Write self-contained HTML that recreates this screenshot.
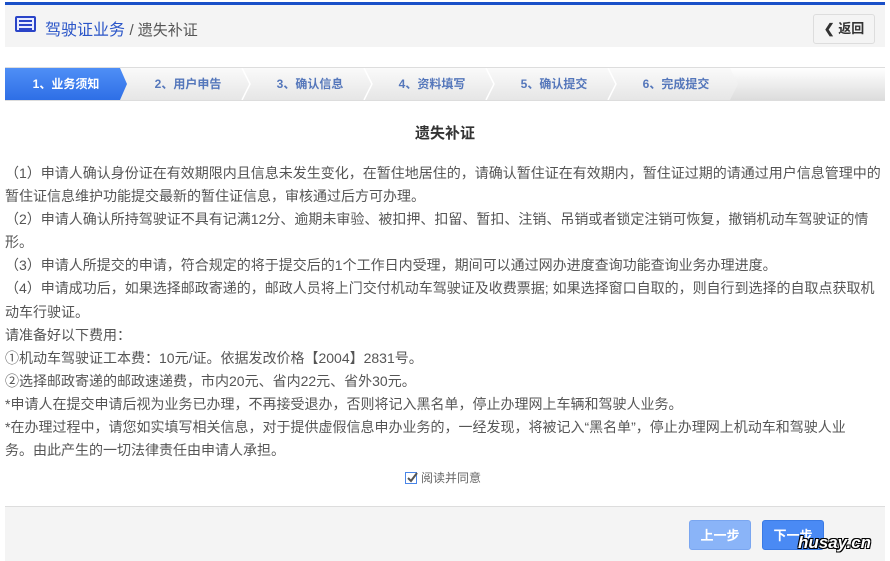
<!DOCTYPE html>
<html><head><meta charset="utf-8"><style>
*{margin:0;padding:0;box-sizing:border-box}
body{width:890px;height:561px;background:#fff;font-family:"Liberation Sans","Noto Sans CJK SC",sans-serif;position:relative;overflow:hidden;color:#555}
.topline{position:absolute;left:5px;top:2px;width:880px;height:3px;background:#1a50c8}
.hdr{position:absolute;left:5px;top:5px;width:880px;height:42px;background:#f4f4f4}
.icon{position:absolute;left:10px;top:11px;width:21px;height:16px;border:2px solid #2a44c8;border-radius:2px;background:#e8ecff}
.icon i{position:absolute;left:2px;right:2px;height:2px;background:#2a44c8}
.ht{position:absolute;left:40px;top:11px;font-size:16px;color:#2a55c8;white-space:nowrap}
.ht span{color:#555;font-size:15px}
.back{position:absolute;left:808px;top:9px;width:62px;height:30px;border:1px solid #ddd;border-radius:3px;background:#f4f4f4;font-size:13px;font-weight:bold;color:#333;text-align:center;line-height:28px}
.steps{position:absolute;left:5px;top:67px;width:880px;height:34px;background:linear-gradient(#fafafa,#e6e6e6);border-top:1px solid #ddd;border-bottom:1px solid #ddd}
.st{position:absolute;top:0;height:32px;line-height:32px;font-size:12px;font-weight:bold;color:#5577bb;width:122px;text-align:center}
.st1{left:0;width:122px;background:linear-gradient(#4f8ff6,#2e6fe6);color:#fff;clip-path:polygon(0 0,115px 0,122px 16px,115px 32px,0 32px)}
.title{position:absolute;left:0;width:890px;top:122px;text-align:center;font-size:15px;font-weight:bold;color:#333}
.txt{position:absolute;left:5px;top:162px;font-size:14px;line-height:23.1px;white-space:nowrap;color:#555}
.chk{position:absolute;left:405px;top:469px;font-size:12px;color:#666}
.chk b{display:inline-block;width:12px;height:12px;border:1px solid #4a86e8;vertical-align:-2px;margin-right:4px;position:relative}
.foot{position:absolute;left:5px;top:506px;width:880px;height:55px;background:#f4f4f4;border-top:1px solid #ddd}
.btn{position:absolute;top:13px;width:62px;height:30px;border-radius:3px;color:#fff;font-size:13px;font-weight:bold;text-align:center;line-height:30px}
.wm{position:absolute;left:798px;top:533px;font-size:17px;font-weight:bold;color:#fff;text-shadow:1px 1px 0 #000,-1px -1px 0 #000,1px -1px 0 #000,-1px 1px 0 #000;font-style:italic}
</style></head><body>
<div class="topline"></div>
<div class="hdr">
<div class="icon"><i style="top:2px"></i><i style="top:6px"></i><i style="top:10px"></i></div>
<div class="ht">驾驶证业务 <span>/ 遗失补证</span></div>
<div class="back">❮ 返回</div>
</div>
<div class="steps">
<div class="st st1">1、业务须知</div>
<div class="st" style="left:122px">2、用户申告</div>
<div class="st" style="left:244px">3、确认信息</div>
<div class="st" style="left:366px">4、资料填写</div>
<div class="st" style="left:488px">5、确认提交</div>
<div class="st" style="left:610px">6、完成提交</div>
<svg style="position:absolute;left:0;top:0" width="880" height="32"><g stroke="#fff" stroke-width="1.5" fill="none"><path d="M237 0l8 16-8 16M359 0l8 16-8 16M481 0l8 16-8 16M603 0l8 16-8 16"/></g><path d="M725 0 L880 0 L880 32 L725 32 L733 16Z" fill="url(#g)"/><defs><linearGradient id="g" x1="0" y1="0" x2="0" y2="1"><stop offset="0" stop-color="#fff"/><stop offset="1" stop-color="#dcdcdc"/></linearGradient></defs></svg>
</div>
<div class="title">遗失补证</div>
<div class="txt">（1）申请人确认身份证在有效期限内且信息未发生变化，在暂住地居住的，请确认暂住证在有效期内，暂住证过期的请通过用户信息管理中的<br>暂住证信息维护功能提交最新的暂住证信息，审核通过后方可办理。<br>（2）申请人确认所持驾驶证不具有记满12分、逾期未审验、被扣押、扣留、暂扣、注销、吊销或者锁定注销可恢复，撤销机动车驾驶证的情<br>形。<br>（3）申请人所提交的申请，符合规定的将于提交后的1个工作日内受理，期间可以通过网办进度查询功能查询业务办理进度。<br>（4）申请成功后，如果选择邮政寄递的，邮政人员将上门交付机动车驾驶证及收费票据; 如果选择窗口自取的，则自行到选择的自取点获取机<br>动车行驶证。<br>请准备好以下费用：<br>①机动车驾驶证工本费：10元/证。依据发改价格【2004】2831号。<br>②选择邮政寄递的邮政速递费，市内20元、省内22元、省外30元。<br>*申请人在提交申请后视为业务已办理，不再接受退办，否则将记入黑名单，停止办理网上车辆和驾驶人业务。<br>*在办理过程中，请您如实填写相关信息，对于提供虚假信息申办业务的，一经发现，将被记入“黑名单”，停止办理网上机动车和驾驶人业<br>务。由此产生的一切法律责任由申请人承担。</div>
<div class="chk"><b><svg width="12" height="12" style="position:absolute;left:0;top:-1px"><path d="M2 6l3 3 6-8" stroke="#555" stroke-width="2" fill="none"/></svg></b>阅读并同意</div>
<div class="foot">
<div class="btn" style="left:684px;background:#8ab4f8;border:1px solid #7aa6f0">上一步</div>
<div class="btn" style="left:757px;background:#4a8af4;border:1px solid #3a7ae4">下一步</div>
</div>
<div class="wm">husay.cn</div>
</body></html>
